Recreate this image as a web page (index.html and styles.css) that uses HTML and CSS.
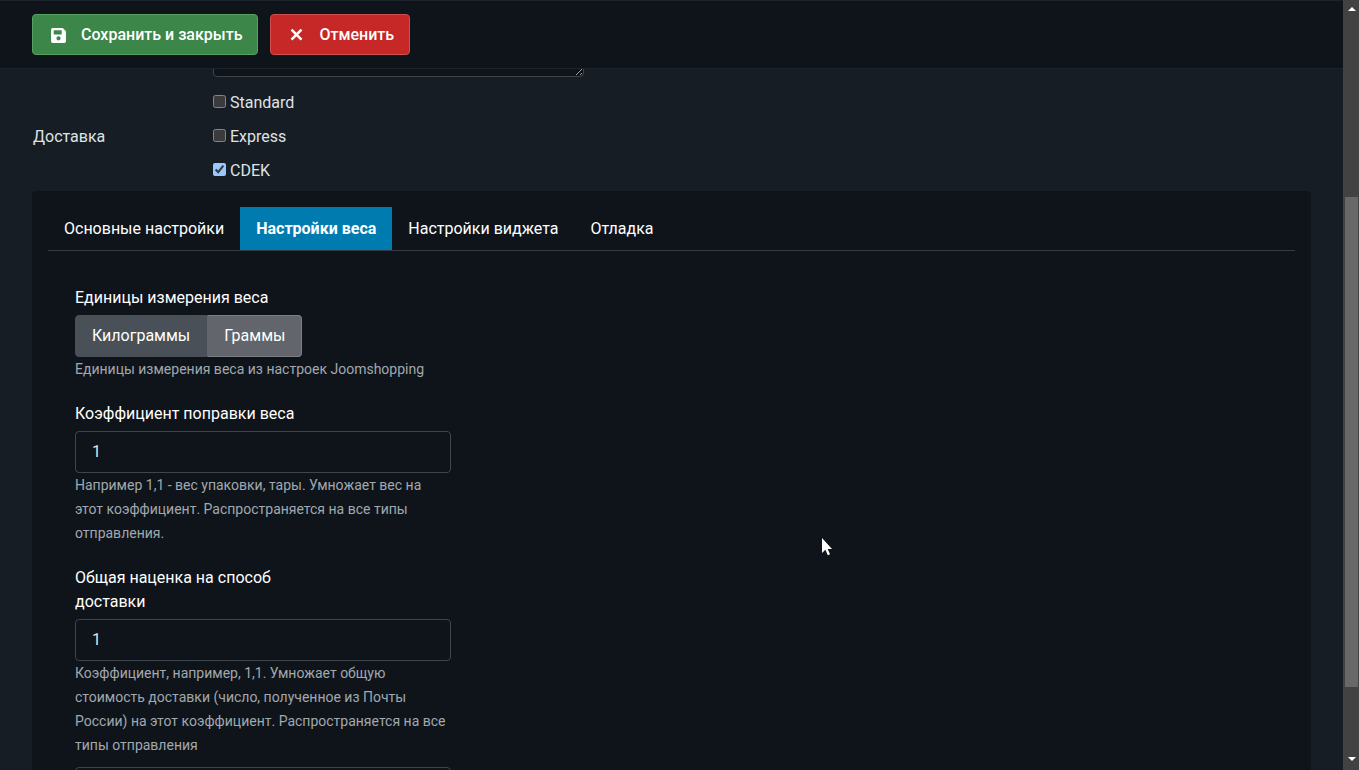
FILE: index.html
```
<!DOCTYPE html>
<html lang="ru">
<head>
<meta charset="utf-8">
<title>Способ доставки</title>
<link rel="stylesheet" href="styles.css">
</head>
<body>
<div class="window">
  <div class="page">
    <header class="toolbar">
      <button class="btn btn-save" type="button">
        <svg class="icon" viewBox="0 0 16 16" aria-hidden="true"><path fill="currentColor" fill-rule="evenodd" d="M2.500 1h9.500L15 4v9.500a1.500 1.500 0 0 1-1.500 1.500h-11A1.500 1.500 0 0 1 1 13.500v-11A1.500 1.500 0 0 1 2.500 1zM3.500 3v4h7.500V3zM8 8.700a2 2 0 1 0 0 4a2 2 0 0 0 0-4z"/></svg>
        <span>Сохранить и закрыть</span>
      </button>
      <button class="btn btn-cancel" type="button">
        <svg class="icon" viewBox="0 0 16 16" aria-hidden="true"><path fill="none" stroke="currentColor" stroke-width="2.400" d="M3.300 2.500l9.400 9.400M12.700 2.500L3.300 11.900"/></svg>
        <span>Отменить</span>
      </button>
    </header>
    <main class="content">
      <textarea class="description" aria-label="Описание"></textarea>
      <div class="delivery" role="group" aria-labelledby="delivery-title">
        <span id="delivery-title">Доставка</span>
        <div class="checks">
          <label class="check"><input type="checkbox"><span>Standard</span></label>
          <label class="check"><input type="checkbox"><span>Express</span></label>
          <label class="check"><input type="checkbox" checked><span>CDEK</span></label>
        </div>
      </div>
      <section class="panel">
        <div class="tabs" role="tablist">
          <button class="tab" type="button" role="tab">Основные настройки</button>
          <button class="tab active" type="button" role="tab" aria-selected="true">Настройки веса</button>
          <button class="tab" type="button" role="tab">Настройки виджета</button>
          <button class="tab" type="button" role="tab">Отладка</button>
        </div>
        <div class="fields">
          <div class="field" role="group" aria-labelledby="units">
            <span class="title" id="units">Единицы измерения веса</span>
            <div class="switch">
              <button class="option" type="button">Килограммы</button>
              <button class="option selected" type="button" aria-pressed="true">Граммы</button>
            </div>
            <p class="help">Единицы измерения веса из настроек Joomshopping</p>
          </div>
          <div class="field">
            <label class="title" for="ratio">Коэффициент поправки веса</label>
            <input class="text" id="ratio" type="text" value="1">
            <p class="help">Например 1,1 - вес упаковки, тары. Умножает вес на этот коэффициент. Распространяется на все типы отправления.</p>
          </div>
          <div class="field">
            <label class="title" for="markup">Общая наценка на способ доставки</label>
            <input class="text" id="markup" type="text" value="1">
            <p class="help">Коэффициент, например, 1,1. Умножает общую стоимость доставки (число, полученное из Почты России) на этот коэффициент. Распространяется на все типы отправления</p>
            <input class="text next" type="text" aria-label="Значение">
          </div>
        </div>
      </section>
    </main>
  </div>
  <div class="scrollbar" aria-hidden="true">
    <svg class="arrow" viewBox="0 0 8 4"><path d="M4 0l4 4H0z"/></svg>
    <div class="track"><div class="thumb"></div></div>
    <svg class="arrow" viewBox="0 0 8 4"><path d="M0 0h8L4 4z"/></svg>
  </div>
</div>
<svg class="cursor" viewBox="0 0 12 18" aria-hidden="true"><path fill="#fff" d="M1 0v15l3.400-3.200L6.800 17.300l2.200-1L6.700 11H11z"/></svg>
</body>
</html>
```

FILE: styles.css
```
* { box-sizing: border-box; }

body {
  margin: 0;
  background: #171d24;
  color: #dfe3e7;
  font: 16px/24px Roboto, "Noto Sans", sans-serif;
}

button, input, textarea { font: inherit; color: inherit; }

.window { display: flex; height: 100vh; overflow: hidden; }
.page { flex: 1; min-width: 0; }

.toolbar {
  position: relative;
  z-index: 1;
  display: flex;
  gap: 12px;
  padding: 13px 32px;
  background: #0f141b;
  border-top: 1px solid #1d232b;
  border-bottom: 1px solid #1d232b;
}

.btn {
  display: flex;
  align-items: center;
  gap: 14px;
  padding: 8px 15px 7px 17px;
  line-height: 24px;
  border: 1px solid;
  border-radius: 4px;
  color: #fff;
  font-weight: 500;
}
.btn-save { background: #3d8649; border-color: #55a161; }
.btn-cancel { background: #c52827; border-color: #d14f4e; }
.icon { width: 17px; height: 17px; }

.content { padding: 0 32px; }

.description {
  display: block;
  width: 371px;
  height: 80px;
  margin: -72px 0 0 181px;
  background: #0f141b;
  border: 1px solid #3f454d;
  border-radius: 4px;
  color-scheme: dark;
}

.delivery {
  display: grid;
  grid-template-columns: 180px 1fr;
  align-items: center;
  padding: 14px 0 8px 1px;
}
.checks { display: grid; gap: 10px; }
.check { display: flex; align-items: center; gap: 4px; }
.check input { width: 13px; height: 13px; margin: 0 0 4px; color-scheme: dark; }

.panel {
  padding: 16px;
  background: #0f141b;
  border-radius: 4px;
}
.tabs { display: flex; border-bottom: 1px solid #343a41; }
.tab {
  padding: 10px 16px 9px;
  border: 0;
  background: none;
  color: #fff;
}
.tab.active { background: #007bb0; font-weight: 700; }

.fields {
  display: grid;
  gap: 21px;
  width: 376px;
  margin: 35px 0 0 27px;
}
.title {
  display: block;
  max-width: 220px;
  margin-bottom: 5px;
  color: #fff;
}
.switch { display: flex; }
.option {
  padding: 8px 16px;
  border: 1px solid #495057;
  border-radius: 4px 0 0 4px;
  background: #495057;
  color: #fff;
}
.option.selected {
  border-color: #7b7e84;
  border-left-color: #62656b;
  border-radius: 0 4px 4px 0;
  background: #62656b;
}
.help { margin: 0; font-size: 14px; color: #a1a8ae; }
.text {
  display: block;
  width: 100%;
  height: 42px;
  padding: 7px 16px 9px;
  background: #0f141b;
  border: 1px solid #3f454d;
  border-radius: 4px;
}
.next { margin-top: 10px; }

.scrollbar {
  display: flex;
  flex-direction: column;
  align-items: center;
  width: 16px;
  padding: 7px 1px 9px 2px;
  background: #424242;
}
.arrow { width: 8px; height: 4px; fill: #fff; }
.track { flex: 1; width: 100%; padding-top: 186px; }
.thumb { height: 490px; background: #686868; }

.cursor {
  position: absolute;
  left: 821px;
  top: 538px;
  width: 12px;
  height: 18px;
}
```
